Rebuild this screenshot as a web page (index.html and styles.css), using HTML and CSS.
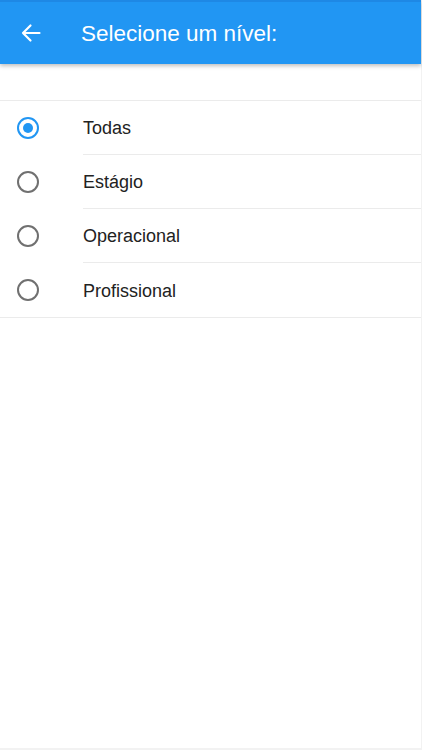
FILE: index.html
```html
<!DOCTYPE html>
<html>
<head>
    <title>Selecione um nível</title>
    <link rel="stylesheet" href="styles.css">
</head>
<body>
    <div class="screen">
        <header class="toolbar">
            <button class="back" aria-label="Voltar">
                <svg width="20" height="20" viewBox="0 0 20 20">
                    <path d="M2 10H18.5M9.5 2.5L2 10l7.5 7.5" fill="none" stroke="#fff" stroke-width="2.2" stroke-linecap="round" stroke-linejoin="round"/>
                </svg>
            </button>
            <h1>Selecione um nível:</h1>
        </header>

        <main>
            <ul class="levels">
                <li class="level selected"><span class="radio"></span><span class="label">Todas</span></li>
                <li class="level"><span class="radio"></span><span class="label">Estágio</span></li>
                <li class="level"><span class="radio"></span><span class="label">Operacional</span></li>
                <li class="level"><span class="radio"></span><span class="label">Profissional</span></li>
            </ul>
        </main>
    </div>
</body>
</html>
```

FILE: styles.css
```css
body {
    margin: 0;
    padding: 0;
    font-family: "Liberation Sans", Arial, sans-serif;
    background-color: #fff;
}
.screen {
    height: 750px;
    box-sizing: border-box;
    border-right: 1px solid #f2f2f2;
    border-bottom: 2px solid #f2f2f2;
}
.toolbar {
    height: 62px;
    border-top: 2px solid #1e88e5;
    background-color: #2196f3;
    color: #fff;
    display: flex;
    align-items: center;
    box-shadow: 0 2px 4px rgba(0, 0, 0, 0.25);
}
.back {
    width: 20px;
    height: 20px;
    padding: 0;
    margin: 0 40px 0 21px;
    border: none;
    background: none;
    display: flex;
}
.toolbar h1 {
    margin: 0;
    padding-top: 1px;
    font-size: 22.5px;
    font-weight: normal;
}
main {
    padding-top: 36px;
}
.levels {
    list-style: none;
    margin: 0;
    padding: 0;
    border-top: 1px solid #ebebeb;
    border-bottom: 1px solid #ebebeb;
}
.level {
    display: flex;
    align-items: center;
    height: 54px;
}
.radio {
    width: 18px;
    height: 18px;
    border: 2px solid #707070;
    border-radius: 50%;
    margin: 0 44px 0 17px;
    display: flex;
    align-items: center;
    justify-content: center;
    flex-shrink: 0;
}
.selected .radio {
    border-color: #2196f3;
}
.selected .radio::after {
    content: "";
    width: 10px;
    height: 10px;
    border-radius: 50%;
    background-color: #2196f3;
}
.label {
    flex: 1;
    height: 100%;
    box-sizing: border-box;
    padding-top: 2px;
    display: flex;
    align-items: center;
    font-size: 18px;
    color: #222;
    border-bottom: 1px solid #ebebeb;
}
.level:last-child .label {
    border-bottom: none;
}
```
